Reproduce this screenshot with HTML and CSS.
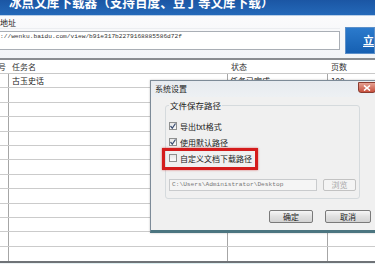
FILE: index.html
```html
<!DOCTYPE html>
<html lang="zh-CN">
<head>
<meta charset="utf-8">
<title>冰点文库下载器</title>
<link rel="stylesheet" href="styles.css">
</head>
<body>
<div class="app">
  <div class="banner"><h1>冰点文库下载器（支持百度、豆丁等文库下载）</h1></div>

  <div class="addr">
    <div class="addr-main">
      <div class="addr-label">地址</div>
      <div class="addr-input">://wenku.baidu.com/view/b91e317b2279168885586d72f</div>
    </div>
    <div class="go-btn"><u>立即下载</u></div>
  </div>

  <div class="list">
    <div class="list-head">
      <span class="c1">序号</span><span class="c2">任务名</span><span class="c3">状态</span><span class="c4">页数</span>
    </div>
    <div class="list-row"><span class="c1"></span><span class="c2">古玉史话</span><span class="c3">任务已完成</span><span class="c4">100</span></div>
    <div class="list-row"><span class="c1"></span><span class="c2"></span><span class="c3"></span><span class="c4"></span></div>
    <div class="list-row"><span class="c1"></span><span class="c2"></span><span class="c3"></span><span class="c4"></span></div>
    <div class="list-row"><span class="c1"></span><span class="c2"></span><span class="c3"></span><span class="c4"></span></div>
    <div class="list-row"><span class="c1"></span><span class="c2"></span><span class="c3"></span><span class="c4"></span></div>
    <div class="list-row"><span class="c1"></span><span class="c2"></span><span class="c3"></span><span class="c4"></span></div>
    <div class="list-row"><span class="c1"></span><span class="c2"></span><span class="c3"></span><span class="c4"></span></div>
    <div class="list-row"><span class="c1"></span><span class="c2"></span><span class="c3"></span><span class="c4"></span></div>
    <div class="list-row"><span class="c1"></span><span class="c2"></span><span class="c3"></span><span class="c4"></span></div>
    <div class="list-row"><span class="c1"></span><span class="c2"></span><span class="c3"></span><span class="c4"></span></div>
    <div class="list-row"><span class="c1"></span><span class="c2"></span><span class="c3"></span><span class="c4"></span></div>
    <div class="list-row"><span class="c1"></span><span class="c2"></span><span class="c3"></span><span class="c4"></span></div>
    <div class="list-row last"><span class="c1"></span><span class="c2"></span><span class="c3"></span><span class="c4"></span></div>
  </div>
  <div class="status-strip"></div>

  <div class="dialog">
    <div class="dlg-title">系统设置</div>
    <div class="dlg-close">
      <svg width="8" height="6" viewBox="0 0 8 6"><path d="M1 0.5 L7 5.5 M7 0.5 L1 5.5" stroke="#fff" stroke-width="1.6"/></svg>
    </div>
    <div class="dlg-body">
      <fieldset class="group">
        <legend>文件保存路径</legend>
        <div class="check-row">
          <span class="box checked"><svg width="8" height="8" viewBox="0 0 8 8"><path d="M1.5 4 L3.3 6.2 L6.5 1.5" fill="none" stroke="#3d4f73" stroke-width="1.2"/></svg></span>
          <span>导出txt格式</span>
        </div>
        <div class="check-row">
          <span class="box checked"><svg width="8" height="8" viewBox="0 0 8 8"><path d="M1.5 4 L3.3 6.2 L6.5 1.5" fill="none" stroke="#3d4f73" stroke-width="1.2"/></svg></span>
          <span>使用默认路径</span>
        </div>
        <div class="check-row">
          <span class="box"></span>
          <span>自定义文档下载路径</span>
        </div>
        <div class="path-row">
          <div class="path-input">C:\Users\Administrator\Desktop</div>
          <div class="btn disabled">浏览</div>
        </div>
      </fieldset>
      <div class="dlg-btns">
        <div class="btn ok">确定</div>
        <div class="btn cancel">取消</div>
      </div>
    </div>
    <div class="mark"></div>
  </div>
</div>
</body>
</html>
```

FILE: styles.css
```css
body {
    margin: 0;
    font-family: "Noto Sans CJK SC", "Liberation Sans", sans-serif;
    font-size: 8px;
    color: #222;
    background: #f7f8fa;
}
.app {
    position: relative;
    width: 375px;
    height: 264px;
    overflow: hidden;
}

/* top banner */
.banner {
    height: 15px;
    overflow: hidden;
    background: linear-gradient(to bottom, #1b56a4, #2469b9);
    border-bottom: 1px solid #b9cfe8;
}
.banner h1 {
    margin: -6px 0 0 9px;
    font-size: 12.6px;
    line-height: 16px;
    font-weight: bold;
    color: #fff;
    white-space: nowrap;
}

/* address line */
.addr {
    display: flex;
    height: 42px;
    padding-top: 2px;
    box-sizing: border-box;
    background: linear-gradient(to bottom, #fbfbfc, #f2f4f7);
}
.addr-main {
    width: 343px;
    margin-left: -3px;
}
.addr-label {
    padding-left: 3px;
    line-height: 10px;
    height: 10px;
    border-bottom: 1px solid #eceef1;
}
.addr-input {
    margin-top: 2px;
    height: 19px;
    box-sizing: border-box;
    border: 1px solid #a9aeb5;
    background: #fff;
    font-family: "Liberation Mono", monospace;
    font-size: 6.2px;
    line-height: 9px;
    padding-left: 2px;
    color: #333;
    white-space: nowrap;
}
.go-btn {
    margin: 9px 0 0 5px;
    flex: 1;
    height: 27px;
    box-sizing: border-box;
    border: 1px solid #5b8fc9;
    background: linear-gradient(to bottom, #2b7acc, #1660b2);
    color: #fff;
    font-size: 11px;
    font-weight: bold;
    line-height: 25px;
    padding-left: 17px;
    white-space: nowrap;
    overflow: hidden;
}

/* task list */
.list {
    background: #fff;
    border-bottom: 2px solid #6f7377;
}
.list-head,
.list-row {
    display: grid;
    grid-template-columns: 9px 219px 100px 1fr;
    box-sizing: border-box;
    white-space: nowrap;
}
.list-head {
    height: 16px;
    border-top: 2px solid #8a8d91;
    border-bottom: 1px solid #c9c9c9;
    line-height: 13px;
    color: #333;
}
.list-head .c1 {
    text-indent: -10px;
    overflow: visible;
}
.list-head .c2 { padding-left: 3px; }
.list-head .c3 { padding-left: 3px; }
.list-head .c4 { padding-left: 3px; }
.list-row {
    height: 14.4px;
    border-bottom: 1px solid #cbcbcb;
    line-height: 13px;
}
.list-row.last {
    border-bottom: none;
}
.list-row .c1,
.list-row .c2,
.list-row .c3 {
    border-right: 1px solid #a6a6a6;
}
.list-row .c2 { padding-left: 3px; }
.list-row .c3 { padding-left: 2px; }
.list-row .c4 { padding-left: 3px; }
.status-strip {
    height: 4px;
    background: linear-gradient(to right, #eef2f4, #d8ecee 40%, #eef3f5);
}

/* settings dialog */
.dialog {
    position: absolute;
    left: 150px;
    top: 80px;
    width: 232px;
    height: 153px;
    box-sizing: border-box;
    border: 1px solid #7d8b98;
    border-bottom: 3px solid #4b7580;
    background: #f0f0f0;
    box-shadow: 0 0 2px rgba(0, 0, 0, 0.25);
}
.dlg-title {
    height: 16px;
    line-height: 15px;
    padding-left: 4px;
    background: linear-gradient(to bottom, #e7ebf0, #edf0f3);
    color: #1e1e1e;
}
.dlg-close {
    position: absolute;
    left: 207px;
    top: 1px;
    width: 16px;
    height: 9px;
    border: 1px solid #8a3b30;
    border-radius: 0 0 3px 3px;
    background: linear-gradient(to bottom, #e5a091, #c8503e);
    display: flex;
    align-items: center;
    justify-content: center;
}
.dlg-body {
    padding-left: 14px;
}
.group {
    margin: 3px 0 0 0;
    width: 195px;
    box-sizing: border-box;
    padding: 8px 0 7px 3px;
    border: 1px solid #d5dadd;
    border-radius: 3px;
}
.group legend {
    padding: 0 1px;
    line-height: 10px;
    font-size: 8.5px;
}
.check-row {
    display: flex;
    align-items: center;
    gap: 3px;
    height: 16px;
}
.box {
    width: 8px;
    height: 8px;
    box-sizing: border-box;
    border: 1px solid #8e8f8f;
    background: linear-gradient(to bottom, #e6e6e6, #fbfbfb);
    display: flex;
    align-items: center;
    justify-content: center;
}
.box svg {
    flex: none;
}
.path-row {
    display: flex;
    gap: 6px;
    margin-top: 13px;
}
.path-input {
    width: 148px;
    height: 12px;
    box-sizing: border-box;
    border: 1px solid #c9cbcd;
    background: #f5f5f5;
    font-family: "Liberation Mono", monospace;
    font-size: 6.2px;
    line-height: 10px;
    padding-left: 2px;
    color: #777;
    white-space: nowrap;
}
.btn {
    box-sizing: border-box;
    border: 1px solid #7a7a7a;
    border-radius: 2px;
    background: linear-gradient(to bottom, #f6f6f6, #e0e0e0 50%, #d3d3d3);
    text-align: center;
}
.btn.disabled {
    width: 33px;
    height: 12px;
    line-height: 10px;
    border-color: #c2c2c2;
    background: #f4f4f4;
    color: #a8a8a8;
}
.dlg-btns {
    display: flex;
    gap: 12px;
    margin-top: 11px;
    padding-left: 104px;
}
.btn.ok {
    width: 44px;
    height: 13px;
    line-height: 11px;
}
.btn.cancel {
    width: 46px;
    height: 13px;
    line-height: 11px;
}
.mark {
    position: absolute;
    left: 11px;
    top: 67px;
    width: 96px;
    height: 22px;
    box-sizing: border-box;
    border: 3px solid #d41c1c;
    box-shadow: 0 0 2px rgba(200, 20, 20, 0.6);
}
```
